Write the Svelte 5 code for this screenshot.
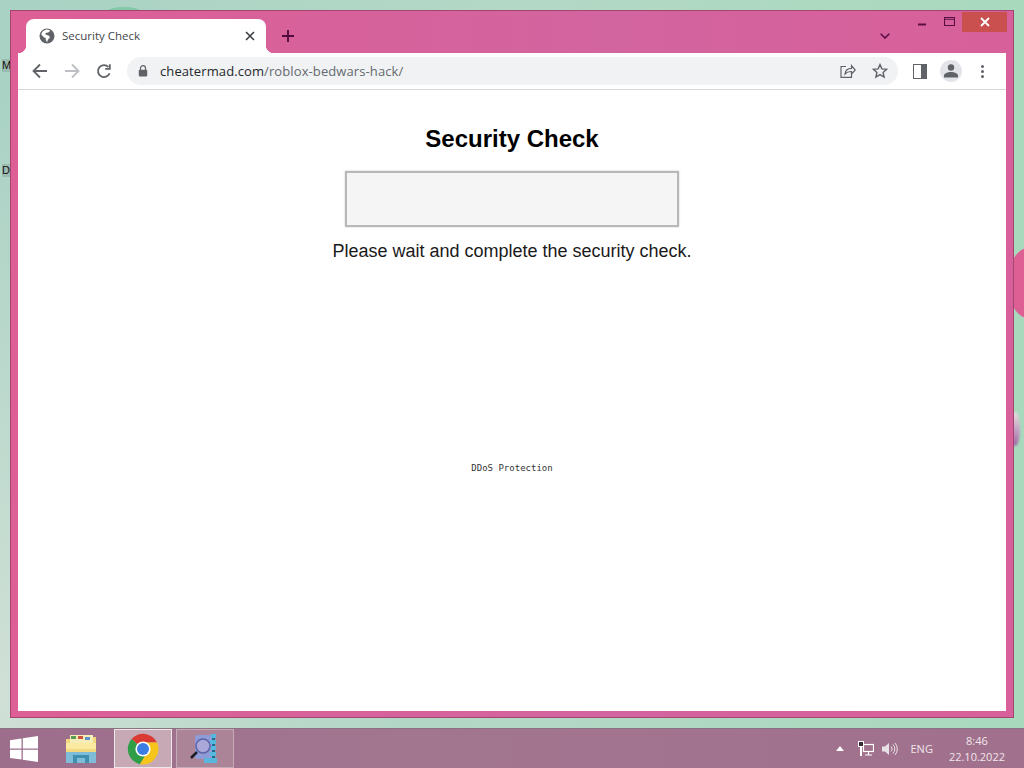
<script>
	const clock = { time: '8:46', date: '22.10.2022' };
</script>

<div class="desktop">
	<span class="desk-label label-m">M</span>
	<span class="desk-label label-d">D</span>
	<div class="blob blob-pink"></div>
	<div class="blob blob-violet"></div>
	<div class="blob blob-top"></div>

	<div class="window">
		<div class="frame-controls">
			<svg class="ctl ctl-min" width="10" height="10" viewBox="0 0 10 10"><path d="M1 7.5h8" stroke="#5a0f45" stroke-width="2" /></svg>
			<svg class="ctl ctl-max" width="11" height="9" viewBox="0 0 11 9"><path d="M.5.5h10v8H.5zM.5 2.200h10" fill="none" stroke="#5a0f45" stroke-width="1.100" /></svg>
			<div class="close">
				<svg width="10" height="10" viewBox="0 0 10 10"><path d="M1 1l8 8M9 1l-8 8" stroke="#fff" stroke-width="1.800" /></svg>
			</div>
		</div>

		<div class="tabstrip">
			<div class="tab">
				<svg class="globe" width="16" height="16" viewBox="0 0 16 16">
					<circle cx="8" cy="8" r="7.500" fill="#5f6368" />
					<path d="M7 1.500C5.500 2.500 3.500 3 3 4.500L2.200 6.500 5 9.500l1.600.3.2 2.200 1.400 2.300.6-2.600 2-1.900-.4-1.700-3-1.300-1-.3.2-1.600L9 4.600l1.500-.8.4-1.600C9.500 1.500 8 1.300 7 1.500z" fill="#fff" />
				</svg>
				<span class="tab-title">Security Check</span>
				<svg class="tab-x" width="10" height="10" viewBox="0 0 10 10"><path d="M1 1l8 8M9 1l-8 8" stroke="#3c4043" stroke-width="1.600" /></svg>
			</div>
			<svg class="plus" width="12" height="12" viewBox="0 0 12 12"><path d="M6 0v12M0 6h12" stroke="#4f0b3c" stroke-width="1.800" /></svg>
			<svg class="chev" width="10" height="6" viewBox="0 0 10 6"><path d="M.7.7L5 5l4.300-4.300" fill="none" stroke="#5a0f45" stroke-width="1.600" /></svg>
		</div>

		<div class="toolbar">
			<svg class="nav" width="16" height="16" viewBox="0 0 16 16"><path d="M15 8H2M8 1.500L1.500 8 8 14.500" fill="none" stroke="#5f6368" stroke-width="1.800" /></svg>
			<svg class="nav" width="16" height="16" viewBox="0 0 16 16"><path d="M1 8h13M8 1.500L14.500 8 8 14.500" fill="none" stroke="#bcbfc3" stroke-width="1.800" /></svg>
			<svg class="nav" width="16" height="16" viewBox="0 0 16 16"><path d="M13.600 10.200A6 6 0 1 1 12.400 4M13.800 1.200v4.600H9.200" fill="none" stroke="#5f6368" stroke-width="1.800" /></svg>
			<div class="omnibox">
				<svg class="lock" width="10" height="12" viewBox="0 0 10 12"><path d="M2.500 5V3.200a2.500 2.500 0 0 1 5 0V5" fill="none" stroke="#5f6368" stroke-width="1.200" /><rect x=".8" y="4.800" width="8.400" height="6.600" rx=".8" fill="#5f6368" /></svg>
				<span class="url"><span class="host">cheatermad.com</span>/roblox-bedwars-hack/</span>
				<svg class="share" width="16" height="14" viewBox="0 0 16 14"><path d="M6 2.500H1v10.800h10.500V10M5 10c.4-3.600 3-5.600 6.500-5.600V1.600L15.200 6l-3.700 4.100V7.500C8.800 7.400 6.800 8 5 10z" fill="none" stroke="#5f6368" stroke-width="1.200" /></svg>
				<svg class="star" width="16" height="16" viewBox="0 0 16 16"><path d="M8 1.600l1.900 4.300 4.700.4-3.500 3.100 1 4.600L8 11.600 3.900 14l1-4.600-3.500-3.100 4.700-.4z" fill="none" stroke="#5f6368" stroke-width="1.400" /></svg>
			</div>
			<div class="panel-btn"></div>
			<div class="avatar">
				<svg width="14" height="14" viewBox="0 0 14 14"><circle cx="7" cy="3.500" r="3.200" fill="#5f6368" /><path d="M0 13.500v-1.800C0 9.300 3.800 8 7 8s7 1.300 7 3.700v1.800z" fill="#5f6368" /></svg>
			</div>
			<div class="menu-dots"><i></i><i></i><i></i></div>
		</div>

		<main class="page">
			<h1>Security Check</h1>
			<div class="check-box"></div>
			<p class="wait">Please wait and complete the security check.</p>
			<p class="ddos">DDoS Protection</p>
		</main>
	</div>

	<footer class="taskbar">
		<svg class="start" width="28" height="26" viewBox="0 0 28 26"><path d="M0 4.200L11.500 2.500V12.400H0zM12.800 2.300L28 0V12.400H12.800zM0 13.700H11.500V23.600L0 22zM12.800 13.700H28V26L12.800 23.800z" fill="#fff" /></svg>
		<div class="task-btn plain">
			<svg width="32" height="30" viewBox="0 0 32 30">
				<path d="M1 5h10l2-2h18v24H1z" fill="#f3d77e" />
				<rect x="5" y="1" width="23" height="8" fill="#f6eeb9" />
				<rect x="6" y="2" width="5" height="3" fill="#5b9a52" />
				<rect x="13" y="2" width="5" height="3" fill="#c9553e" />
				<rect x="20" y="3" width="5" height="3" fill="#5d93c9" />
				<path d="M1 9h30v6H1z" fill="#fbe9a2" />
				<path d="M1 18h30v11H1z" fill="#7fbcd8" />
				<path d="M8 29v-8h16v8h-4v-5h-8v5z" fill="#3f8fb0" />
			</svg>
		</div>
		<div class="task-btn active">
			<svg width="32" height="32" viewBox="0 0 32 32">
				<path d="M16 16L4.500 6A15.500 15.500 0 0 1 30 9.500H16z" fill="#d93a32" />
				<path d="M16 16L4.500 6A15.500 15.500 0 0 0 13 31.200L20 20z" fill="#2f9e47" />
				<path d="M16 9.500H30A15.500 15.500 0 0 1 13 31.200L22 16z" fill="#f6c51c" />
				<circle cx="16" cy="16" r="7.600" fill="#fff" />
				<circle cx="16" cy="16" r="6" fill="#3b7de2" />
			</svg>
		</div>
		<div class="task-btn running">
			<svg width="32" height="32" viewBox="0 0 32 32">
				<rect x="6" y="2" width="18" height="24" rx="2" fill="#8f9bd6" />
				<circle cx="14" cy="13" r="7" fill="#a9a8d8" stroke="#5c63a8" stroke-width="1.500" />
				<path d="M8 19l-6 6" stroke="#1c1c28" stroke-width="2.500" />
				<path d="M22 1h5v4h-5zM21 7h6v4h-6zM22 13h5v4h-5zM21 19h6v4h-6zM15 25h13v5H15z" fill="#57b7dc" />
				<path d="M23 5h3v2h-3zM23 11h3v2h-3zM23 17h3v2h-3zM23 23h3v2h-3z" fill="#1e6d94" />
			</svg>
		</div>

		<div class="tray">
			<svg class="tray-up" width="8" height="5" viewBox="0 0 8 5"><path d="M4 0l4 5H0z" fill="#fff" /></svg>
			<svg class="tray-net" width="16" height="16" viewBox="0 0 16 16">
				<rect x="5.500" y="3.500" width="10" height="7" fill="none" stroke="#fff" stroke-width="1.200" />
				<path d="M7 14h7M10.500 10.500V14" stroke="#fff" stroke-width="1.200" />
				<rect x=".5" y=".5" width="5" height="5" fill="#3a2a34" stroke="#fff" />
				<path d="M3 6v9" stroke="#fff" stroke-width="2" />
			</svg>
			<svg class="tray-vol" width="16" height="14" viewBox="0 0 16 14">
				<path d="M0 4.500h3L7 1v12L3 9.500H0z" fill="#e8e2e6" />
				<path d="M9 4.500a3.500 3.500 0 0 1 0 5M11 2.500a6.500 6.500 0 0 1 0 9M13 1a9 9 0 0 1 0 12" fill="none" stroke="#e8e2e6" />
			</svg>
			<span class="lang">ENG</span>
			<div class="clock">
				<span>{clock.time}</span>
				<span>{clock.date}</span>
			</div>
		</div>
	</footer>
</div>

<style>
	:global(body) {
		margin: 0;
	}

	.desktop {
		position: relative;
		width: 1024px;
		height: 768px;
		overflow: hidden;
		background:
			radial-gradient(ellipse 420px 600px at 0 90%, #d0e0d6 0, rgba(208, 224, 214, 0) 100%),
			linear-gradient(90deg, #a9d2c4 0%, #b4d8c6 50%, #a8d9bd 100%);
		font-family: 'Open Sans', 'Liberation Sans', sans-serif;
	}

	.desk-label {
		position: absolute;
		left: 2px;
		font: 11px 'Liberation Sans', sans-serif;
		color: #111;
		background: rgba(90, 90, 90, 0.2);
		width: 8px;
		overflow: hidden;
		line-height: 13px;
	}

	.label-m {
		top: 59px;
	}

	.label-d {
		top: 164px;
	}

	.blob {
		position: absolute;
		border-radius: 50%;
	}

	.blob-pink {
		left: 1008px;
		top: 248px;
		width: 40px;
		height: 70px;
		background: #dd5f93;
	}

	.blob-violet {
		left: 1010px;
		top: 412px;
		width: 10px;
		height: 34px;
		background: linear-gradient(180deg, #eadfe0, #a367a8);
		filter: blur(1px);
	}

	.blob-top {
		left: 108px;
		top: 7px;
		width: 32px;
		height: 8px;
		background: #84c8a8;
	}

	.window {
		position: absolute;
		left: 10px;
		top: 10px;
		width: 1004px;
		height: 708px;
		box-sizing: border-box;
		border: 1px solid #a3466f;
		background: linear-gradient(90deg, #dd5f96 0%, #d2649f 60%, #d8609a 100%);
		padding: 8px 7px 6px;
		display: flex;
		flex-direction: column;
	}

	.frame-controls {
		position: absolute;
		inset: 0;
		pointer-events: none;
	}

	.ctl {
		position: absolute;
	}

	.ctl-min {
		left: 906px;
		top: 6px;
	}

	.ctl-max {
		left: 933px;
		top: 6px;
	}

	.close {
		position: absolute;
		left: 951px;
		top: 1px;
		width: 45px;
		height: 20px;
		background: #c9504f;
		display: flex;
		align-items: center;
		justify-content: center;
	}

	.tabstrip {
		height: 34px;
		display: flex;
		align-items: center;
		position: relative;
	}

	.tab {
		width: 240px;
		height: 34px;
		margin-left: 8px;
		background: #fff;
		border-radius: 8px 8px 0 0;
		display: flex;
		align-items: center;
		box-sizing: border-box;
		padding: 0 11px 0 13px;
		position: relative;
	}

	.tab::before {
		content: '';
		position: absolute;
		left: -8px;
		bottom: 0;
		width: 8px;
		height: 8px;
		background: radial-gradient(circle at 0 0, transparent 8px, #fff 8.5px);
	}

	.tab::after {
		content: '';
		position: absolute;
		right: -8px;
		bottom: 0;
		width: 8px;
		height: 8px;
		background: radial-gradient(circle at 100% 0, transparent 8px, #fff 8.5px);
	}

	.tab-title {
		margin-left: 7px;
		margin-top: -2px;
		flex: 1;
		font-size: 11.5px;
		color: #45474a;
	}

	.plus {
		margin-left: 16px;
	}

	.chev {
		margin-left: auto;
		margin-right: 116px;
	}

	.toolbar {
		height: 36px;
		background: #fff;
		border-bottom: 1px solid #d6d7d9;
		display: flex;
		align-items: center;
		padding-left: 14px;
		gap: 16px;
	}

	.omnibox {
		width: 771px;
		height: 28px;
		margin-left: -1px;
		border-radius: 14px;
		background: #f0f2f4;
		display: flex;
		align-items: center;
		padding: 0 10px 0 11px;
		box-sizing: border-box;
	}

	.lock {
		flex: none;
	}

	.url {
		margin-left: 12px;
		flex: 1;
		font-size: 13px;
		letter-spacing: 0.1px;
		color: #656a6f;
	}

	.host {
		color: #26282b;
	}

	.star {
		margin-left: 16px;
	}

	.panel-btn {
		width: 12px;
		height: 13px;
		border: 1px solid #5f6368;
		background: linear-gradient(90deg, #fff 0 7px, #5f6368 7px);
		margin-left: -1px;
		flex: none;
	}

	.avatar {
		width: 22px;
		height: 22px;
		border-radius: 50%;
		background: #e2e4e9;
		display: flex;
		align-items: center;
		justify-content: center;
		margin-left: -3px;
	}

	.menu-dots {
		display: flex;
		flex-direction: column;
		gap: 2px;
		margin-left: 3px;
	}

	.menu-dots i {
		width: 3px;
		height: 3px;
		border-radius: 50%;
		background: #5f6368;
	}

	.page {
		flex: 1;
		background: #fff;
		text-align: center;
		font-family: 'Liberation Sans', Arial, sans-serif;
		color: #000;
		display: flex;
		flex-direction: column;
		align-items: center;
	}

	h1 {
		margin: 35px 0 0;
		font-size: 24px;
		line-height: 28px;
		font-weight: bold;
	}

	.check-box {
		width: 334px;
		height: 56px;
		margin-top: 18px;
		box-sizing: border-box;
		border: 2px solid #b8b8b8;
		background: #f5f5f5;
		box-shadow: 0 0 2px rgba(0, 0, 0, 0.2);
	}

	.wait {
		margin: 14px 0 0;
		font-size: 18px;
		line-height: 21px;
		color: #1a1a1a;
	}

	.ddos {
		margin: 200px 0 0;
		font: 9px/12px 'DejaVu Sans Mono', monospace;
		color: #333;
	}

	.taskbar {
		position: absolute;
		left: 0;
		bottom: 0;
		width: 100%;
		height: 40px;
		background: linear-gradient(90deg, #9c6e8c 0%, #a37690 40%, #a0708c 100%);
		border-top: 1px solid #8a7281;
		box-sizing: border-box;
		display: flex;
		align-items: center;
		padding-left: 10px;
	}

	.start {
		flex: none;
	}

	.task-btn {
		width: 58px;
		height: 39px;
		box-sizing: border-box;
		display: flex;
		align-items: center;
		justify-content: center;
		flex: none;
	}

	.plain {
		margin-left: 14px;
	}

	.active {
		margin-left: 4px;
		background: #c7a9b5;
		border: 1px solid #efe8ea;
	}

	.running {
		margin-left: 4px;
		background: #ab8497;
		border: 1px solid #c6aab8;
	}

	.tray {
		margin-left: auto;
		display: flex;
		align-items: center;
		color: #f1e6eb;
		padding-right: 19px;
		font-size: 11px;
	}

	.tray-net {
		margin-left: 14px;
	}

	.tray-vol {
		margin-left: 8px;
	}

	.lang {
		margin-left: 12px;
	}

	.clock {
		margin-left: 16px;
		display: flex;
		flex-direction: column;
		align-items: center;
		line-height: 16px;
	}
</style>
